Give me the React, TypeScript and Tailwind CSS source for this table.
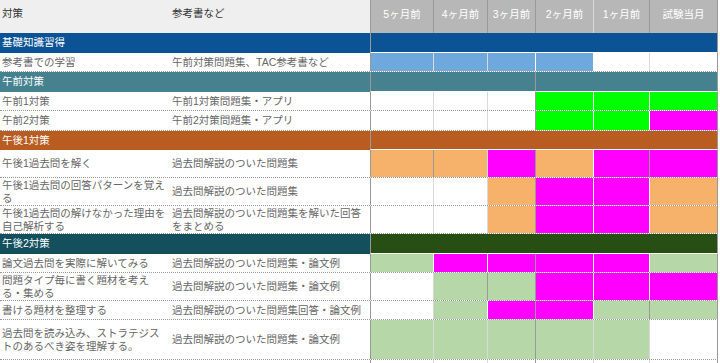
import type { ReactNode } from 'react';

type Fill = 'W' | 'LB' | 'G' | 'M' | 'O' | 'LG';
type Line = 'g' | 'l' | 'w';

const COLS = 'grid grid-cols-[170px_200px_63px_54px_48px_58px_56px_69px]';

const FILL: Record<Fill, string> = {
	W: 'bg-white',
	LB: 'bg-[#6fa8dc]',
	G: 'bg-[#00ff00]',
	M: 'bg-[#ff00ff]',
	O: 'bg-[#f6b26b]',
	LG: 'bg-[#b6d7a8]',
};

const LINE: Record<Line, string> = {
	g: 'border-[#999999]',
	l: 'border-[#d9d9d9]',
	w: 'border-white',
};

const MONTHS = ['5ヶ月前', '4ヶ月前', '3ヶ月前', '2ヶ月前', '1ヶ月前', '試験当月'];

type Row =
	| { kind: 'band'; label: string; left: string; right: string; split?: boolean; h: string }
	| { kind: 'item'; task: string; book: string; cells: Fill[]; lines: Line[]; h: string };

const ROWS: Row[] = [
	{ kind: 'band', label: '基礎知識習得', left: 'bg-[#0b5394]', right: 'bg-[#0b5394]', h: 'h-[20px]' },
	{
		kind: 'item',
		task: '参考書での学習',
		book: '午前対策問題集、TAC参考書など',
		cells: ['LB', 'LB', 'LB', 'LB', 'W', 'W'],
		lines: ['l', 'l', 'w', 'w', 'l'],
		h: 'h-[19px]',
	},
	{ kind: 'band', label: '午前対策', left: 'bg-[#45818e]', right: 'bg-[#45818e]', split: true, h: 'h-[20px]' },
	{
		kind: 'item',
		task: '午前1対策',
		book: '午前1対策問題集・アプリ',
		cells: ['W', 'W', 'W', 'G', 'G', 'G'],
		lines: ['l', 'l', 'g', 'w', 'w'],
		h: 'h-[19px]',
	},
	{
		kind: 'item',
		task: '午前2対策',
		book: '午前2対策問題集・アプリ',
		cells: ['W', 'W', 'W', 'G', 'G', 'M'],
		lines: ['l', 'l', 'g', 'w', 'w'],
		h: 'h-[20px]',
	},
	{ kind: 'band', label: '午後1対策', left: 'bg-[#b85c22]', right: 'bg-[#b85c22]', h: 'h-[19px]' },
	{
		kind: 'item',
		task: '午後1過去問を解く',
		book: '過去問解説のついた問題集',
		cells: ['O', 'O', 'M', 'O', 'M', 'M'],
		lines: ['g', 'l', 'g', 'w', 'g'],
		h: 'h-[28px]',
	},
	{
		kind: 'item',
		task: '午後1過去問の回答パターンを覚える',
		book: '過去問解説のついた問題集',
		cells: ['W', 'W', 'O', 'M', 'M', 'O'],
		lines: ['l', 'l', 'g', 'w', 'w'],
		h: 'h-[28px]',
	},
	{
		kind: 'item',
		task: '午後1過去問の解けなかった理由を自己解析する',
		book: '過去問解説のついた問題集を解いた回答をまとめる',
		cells: ['W', 'W', 'O', 'M', 'M', 'O'],
		lines: ['l', 'l', 'g', 'w', 'w'],
		h: 'h-[28px]',
	},
	{ kind: 'band', label: '午後2対策', left: 'bg-[#134f5c]', right: 'bg-[#274e13]', h: 'h-[20px]' },
	{
		kind: 'item',
		task: '論文過去問を実際に解いてみる',
		book: '過去問解説のついた問題集・論文例',
		cells: ['LG', 'M', 'M', 'M', 'M', 'LG'],
		lines: ['w', 'w', 'g', 'w', 'w'],
		h: 'h-[19px]',
	},
	{
		kind: 'item',
		task: '問題タイプ毎に書く題材を考える・集める',
		book: '過去問解説のついた問題集・論文例',
		cells: ['W', 'LG', 'LG', 'M', 'M', 'M'],
		lines: ['l', 'g', 'g', 'w', 'w'],
		h: 'h-[28px]',
	},
	{
		kind: 'item',
		task: '書ける題材を整理する',
		book: '過去問解説のついた問題集回答・論文例',
		cells: ['W', 'LG', 'M', 'M', 'LG', 'LG'],
		lines: ['l', 'w', 'g', 'w', 'g'],
		h: 'h-[19px]',
	},
	{
		kind: 'item',
		task: '過去問を読み込み、ストラテジストのあるべき姿を理解する。',
		book: '過去問解説のついた問題集・論文例',
		cells: ['LG', 'LG', 'LG', 'LG', 'LG', 'W'],
		lines: ['l', 'l', 'g', 'l', 'l'],
		h: 'h-[40px]',
	},
];

function TextCell({ children }: { children: ReactNode }) {
	return <div className="flex items-center px-[2px] leading-[13px] text-[#666666]">{children}</div>;
}

function MonthCells({ cells, lines }: { cells: Fill[]; lines: Line[] }) {
	return (
		<>
			{cells.map((fill, i) => (
				<div
					key={i}
					className={`border-l ${i === 0 ? LINE.g : LINE[lines[i - 1]]} ${FILL[fill]} ${
						i === cells.length - 1 ? 'border-r border-r-[#999999]' : ''
					}`}
				/>
			))}
		</>
	);
}

function Band({ row }: { row: Extract<Row, { kind: 'band' }> }) {
	return (
		<div className={`${COLS} ${row.h}`}>
			<div className={`col-span-2 flex items-center px-[2px] text-white ${row.left}`}>{row.label}</div>
			{row.split ? (
				<>
					<div className={`col-span-3 border-b border-l border-b-white border-l-[#999999] ${row.right}`} />
					<div
						className={`col-span-3 border-b border-l border-r border-b-white border-l-[#999999] border-r-[#999999] ${row.right}`}
					/>
				</>
			) : (
				<div
					className={`col-span-6 border-b border-l border-r border-b-white border-l-[#999999] border-r-[#999999] ${row.right}`}
				/>
			)}
		</div>
	);
}

function Item({ row }: { row: Extract<Row, { kind: 'item' }> }) {
	return (
		<div className={`${COLS} ${row.h} border-b border-dotted border-[#999999]`}>
			<TextCell>{row.task}</TextCell>
			<TextCell>{row.book}</TextCell>
			<MonthCells cells={row.cells} lines={row.lines} />
		</div>
	);
}

export default function App() {
	const headerLines: Line[] = ['g', 'g', 'g', 'g', 'l', 'g'];

	return (
		<div className="h-[363px] w-[720px] overflow-hidden bg-white font-['Liberation_Sans','Noto_Sans_CJK_JP',sans-serif] text-[10.5px]">
			<div className="w-[718px]">
				<div className={`${COLS} h-[33px]`}>
					<div className="flex items-center bg-[#efefef] px-[2px] pb-[6px] text-[#333333]">対策</div>
					<div className="flex items-center bg-[#efefef] px-[2px] pb-[6px] text-[#333333]">参考書など</div>
					{MONTHS.map((m, i) => (
						<div
							key={m}
							className={`flex items-center justify-center border-l bg-[#b7b7b7] pb-[3px] text-white ${
								LINE[headerLines[i]]
							} ${i === MONTHS.length - 1 ? 'border-r border-r-[#999999]' : ''}`}
						>
							{m}
						</div>
					))}
				</div>

				{ROWS.map((row, i) =>
					row.kind === 'band' ? <Band key={i} row={row} /> : <Item key={i} row={row} />,
				)}

				<div className={`${COLS} h-[3px]`}>
					<div />
					<div />
					<MonthCells cells={['W', 'W', 'W', 'W', 'W', 'W']} lines={['l', 'l', 'g', 'l', 'l']} />
				</div>
			</div>
		</div>
	);
}
